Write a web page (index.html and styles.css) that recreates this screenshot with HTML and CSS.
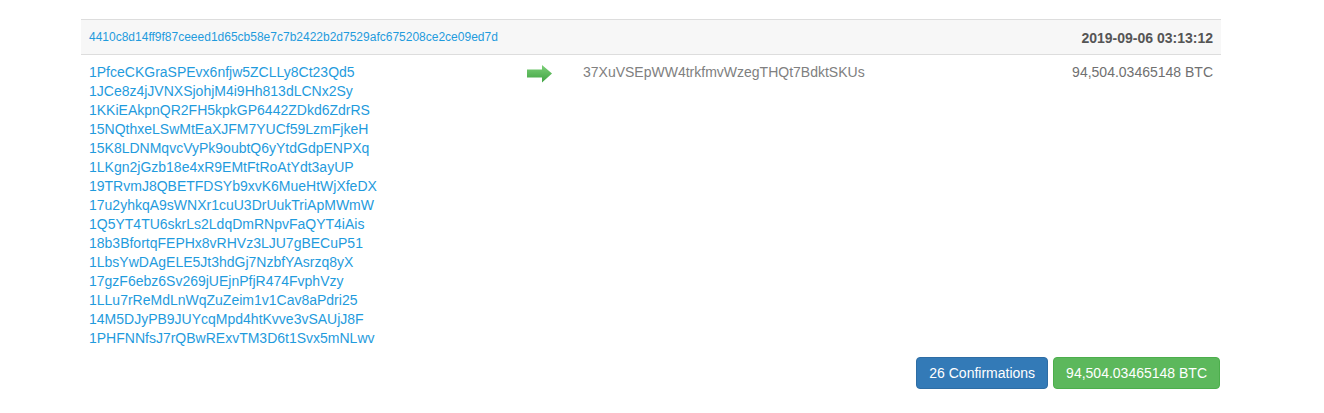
FILE: index.html
```html
<!DOCTYPE html>
<html>
<head>
<meta charset="utf-8">
<link rel="stylesheet" href="styles.css">
</head>
<body>
<div class="container">
  <div class="tx">
    <div class="tx-head">
      <a class="hash" href="#">4410c8d14ff9f87ceeed1d65cb58e7c7b2422b2d7529afc675208ce2ce09ed7d</a>
      <span class="time">2019-09-06 03:13:12</span>
    </div>
    <div class="tx-body">
      <div class="inputs">
        <a href="#">1PfceCKGraSPEvx6nfjw5ZCLLy8Ct23Qd5</a>
        <a href="#">1JCe8z4jJVNXSjohjM4i9Hh813dLCNx2Sy</a>
        <a href="#">1KKiEAkpnQR2FH5kpkGP6442ZDkd6ZdrRS</a>
        <a href="#">15NQthxeLSwMtEaXJFM7YUCf59LzmFjkeH</a>
        <a href="#">15K8LDNMqvcVyPk9oubtQ6yYtdGdpENPXq</a>
        <a href="#">1LKgn2jGzb18e4xR9EMtFtRoAtYdt3ayUP</a>
        <a href="#">19TRvmJ8QBETFDSYb9xvK6MueHtWjXfeDX</a>
        <a href="#">17u2yhkqA9sWNXr1cuU3DrUukTriApMWmW</a>
        <a href="#">1Q5YT4TU6skrLs2LdqDmRNpvFaQYT4iAis</a>
        <a href="#">18b3BfortqFEPHx8vRHVz3LJU7gBECuP51</a>
        <a href="#">1LbsYwDAgELE5Jt3hdGj7NzbfYAsrzq8yX</a>
        <a href="#">17gzF6ebz6Sv269jUEjnPfjR474FvphVzy</a>
        <a href="#">1LLu7rReMdLnWqZuZeim1v1Cav8aPdri25</a>
        <a href="#">14M5DJyPB9JUYcqMpd4htKvve3vSAUjJ8F</a>
        <a href="#">1PHFNNfsJ7rQBwRExvTM3D6t1Svx5mNLwv</a>
      </div>
      <div class="arrow-cell">
        <svg width="25" height="18" viewBox="0 0 25 18">
          <defs>
            <linearGradient id="g" x1="0" y1="0" x2="0" y2="1">
              <stop offset="0" stop-color="#7ccf78"/>
              <stop offset="1" stop-color="#3fa342"/>
            </linearGradient>
          </defs>
          <path d="M0 4.5 H15 V0 L25 8.5 L15 17.5 V12.5 H0 Z" fill="url(#g)"/>
        </svg>
      </div>
      <div class="outputs">
        <span class="out-addr">37XuVSEpWW4trkfmvWzegTHQt7BdktSKUs</span>
        <span class="out-amount">94,504.03465148 BTC</span>
      </div>
    </div>
    <div class="tx-foot">
      <span class="btn btn-blue">26 Confirmations</span>
      <span class="btn btn-green">94,504.03465148 BTC</span>
    </div>
  </div>
</div>
</body>
</html>
```

FILE: styles.css
```css
* { box-sizing: border-box; }
body {
  margin: 0;
  font-family: "Liberation Sans", Arial, sans-serif;
  font-size: 14px;
  color: #333;
  background: #fff;
}
a { text-decoration: none; color: #1f9bdd; }
.container {
  width: 1140px;
  margin-left: 81px;
  padding-top: 19px;
}
.tx-head {
  display: flex;
  justify-content: space-between;
  align-items: center;
  height: 36px;
  padding: 0 8px;
  background: #f7f7f7;
  border-top: 1px solid #dddddd;
  border-bottom: 1px solid #dddddd;
}
.hash { font-size: 12px; }
.time {
  font-weight: bold;
  color: #555;
  font-size: 14px;
  padding-top: 1px;
}
.tx-body {
  display: flex;
  padding: 8px 8px 0 8px;
}
.inputs {
  width: 430px;
  display: flex;
  flex-direction: column;
}
.inputs a { line-height: 19px; height: 19px; white-space: nowrap; }
.arrow-cell {
  width: 64px;
  padding-left: 8px;
  padding-top: 2px;
}
.arrow-cell svg { display: block; }
.outputs {
  flex: 1;
  display: flex;
  justify-content: space-between;
  line-height: 19px;
  height: 19px;
}
.out-addr { color: #808080; }
.out-amount { color: #707070; }
.tx-foot {
  display: flex;
  justify-content: flex-end;
  gap: 5px;
  padding-top: 9px;
  padding-right: 1px;
}
.btn {
  display: inline-block;
  height: 32px;
  line-height: 30px;
  padding: 0 12px;
  border: 1px solid transparent;
  border-radius: 4px;
  color: #fff;
  font-size: 14px;
}
.btn-blue { background: #337ab7; border-color: #2e6da4; }
.btn-green { background: #5cb85c; border-color: #4cae4c; }
```
